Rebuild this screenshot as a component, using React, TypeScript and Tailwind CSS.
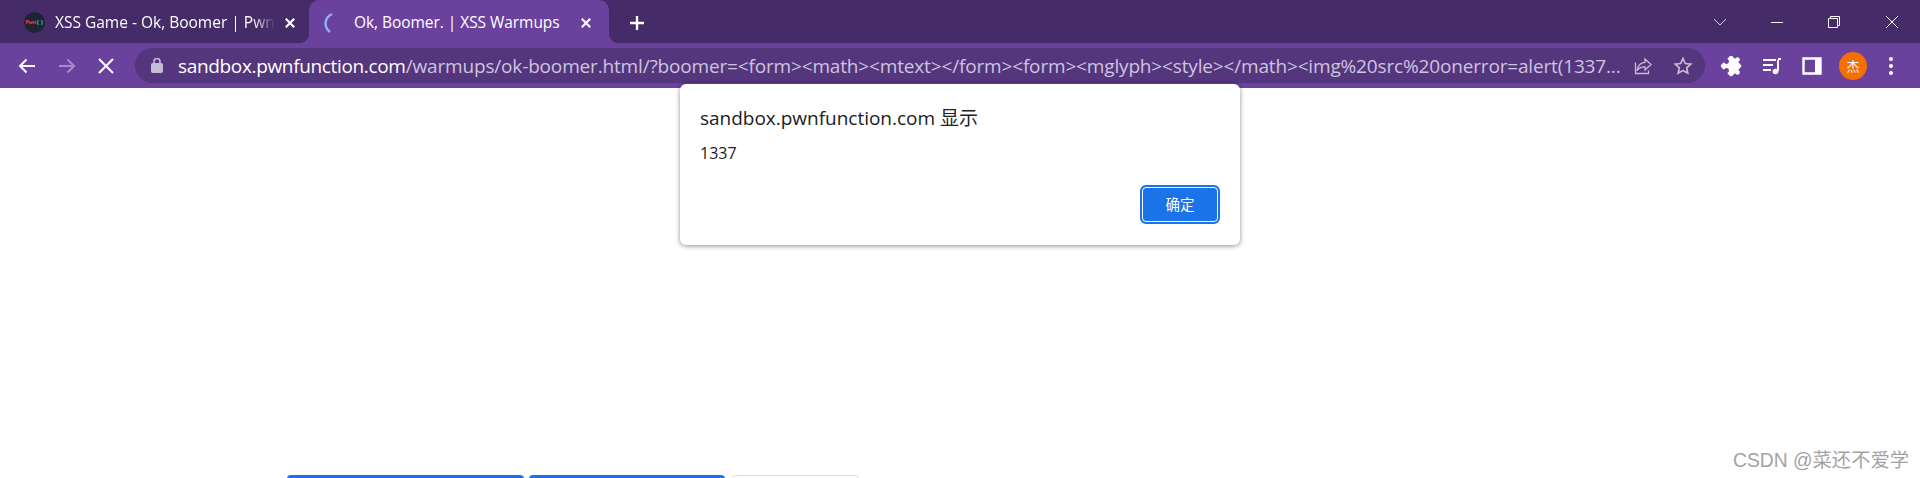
import type { ReactNode } from "react";

const ui = "font-['Open_Sans','Noto_Sans_CJK_SC',sans-serif]";

function Glyph({ size = 20, children, className = "" }: { size?: number; children: ReactNode; className?: string }) {
  return (
    <svg width={size} height={size} viewBox="0 0 20 20" fill="none" stroke="currentColor" className={className}>
      {children}
    </svg>
  );
}

function TabClose() {
  return (
    <Glyph size={14} className="text-white">
      <path d="M4 4l12 12M16 4L4 16" strokeWidth="3" />
    </Glyph>
  );
}

function TabStrip() {
  return (
    <div className="flex h-[43px] bg-[#452c69] text-white">
      <div className="flex w-[309px] items-center pl-[24px] pt-[2px]">
        <div className="flex h-[21px] w-[21px] shrink-0 items-center justify-center rounded-full bg-[#1e2433] font-['Liberation_Mono',monospace] text-[6px] font-bold leading-none">
          <span className="text-[#ef3a62]">Pwn</span>
          <span className="text-[#35c9c0]">()</span>
        </div>
        <div className="ml-[10px] w-[220px] overflow-hidden whitespace-nowrap text-[15.5px] [mask-image:linear-gradient(to_right,black_90%,transparent)]">
          XSS Game - Ok, Boomer | PwnFunction
        </div>
        <div className="ml-[8px]">
          <TabClose />
        </div>
      </div>
      <div className="relative flex h-[43px] w-[300px] items-center rounded-t-[10px] bg-[#6b419e] pl-[12px] pt-[2px]">
        <span className="absolute bottom-0 left-[-10px] h-[10px] w-[10px] bg-[radial-gradient(circle_at_0_0,#452c69_10px,#6b419e_10.5px)]" />
        <span className="absolute bottom-0 right-[-10px] h-[10px] w-[10px] bg-[radial-gradient(circle_at_100%_0,#452c69_10px,#6b419e_10.5px)]" />
        <svg width="16" height="22" viewBox="0 0 16 22" fill="none" className="shrink-0">
          <path d="M11 2C3 6 2.500 15 9 20" stroke="#8ab4f8" strokeWidth="2.400" />
        </svg>
        <div className="ml-[17px] w-[218px] whitespace-nowrap text-[15.5px] tracking-[-0.05px]">Ok, Boomer. | XSS Warmups</div>
        <div className="ml-[7px]">
          <TabClose />
        </div>
      </div>
      <div className="ml-[18px] flex items-center pt-[2px]">
        <Glyph size={20}>
          <path d="M10 3v14M3 10h14" strokeWidth="2.400" />
        </Glyph>
      </div>
      <div className="ml-auto flex items-center text-white">
        <div className="flex w-[57px] justify-center text-[#d9d0e6]">
          <svg width="14" height="8" viewBox="0 0 14 8" fill="none" stroke="currentColor">
            <path d="M1 1l6 6 6-6" />
          </svg>
        </div>
        <div className="flex w-[57px] justify-center">
          <svg width="14" height="14" viewBox="0 0 14 14" fill="none" stroke="currentColor">
            <path d="M1 7.500h12" />
          </svg>
        </div>
        <div className="flex w-[58px] justify-center">
          <svg width="14" height="14" viewBox="0 0 14 14" fill="none" stroke="currentColor">
            <path d="M1.500 3.500h9v9h-9zM3.500 3.500v-2h9v9h-2" />
          </svg>
        </div>
        <div className="flex w-[57px] justify-center">
          <svg width="14" height="14" viewBox="0 0 14 14" fill="none" stroke="currentColor">
            <path d="M1 1l12 12M13 1L1 13" />
          </svg>
        </div>
      </div>
    </div>
  );
}

function Toolbar() {
  return (
    <div className="flex h-[45px] items-start bg-[#6b419e] pt-[5px] text-white">
      <div className="flex h-[35px] w-[135px] shrink-0 items-center">
        <div className="flex w-[47px] justify-center pl-[7px]">
          <Glyph size={20}>
            <path d="M18 10H3M9.500 3.500L3 10l6.500 6.500" strokeWidth="2" />
          </Glyph>
        </div>
        <div className="flex w-[40px] justify-center text-[#a78cc9]">
          <Glyph size={20}>
            <path d="M2 10h15M10.500 3.500L17 10l-6.500 6.500" strokeWidth="2" />
          </Glyph>
        </div>
        <div className="flex w-[38px] justify-center">
          <Glyph size={20}>
            <path d="M3 3l14 14M17 3L3 17" strokeWidth="2" />
          </Glyph>
        </div>
      </div>
      <div className="flex h-[35px] w-[1570px] shrink-0 items-center rounded-full bg-[#54367d]">
        <svg width="12" height="15" viewBox="0 0 12 15" className="ml-[16px] shrink-0 text-[#c7bcd6]" fill="none" stroke="currentColor">
          <rect x="0.500" y="5.500" width="11" height="9" rx="1" fill="currentColor" />
          <path d="M3 6V3.500a3 3 0 0 1 6 0V6" strokeWidth="1.600" />
        </svg>
        <div className="ml-[15px] w-[1449px] whitespace-nowrap pt-[1px] text-[19px] leading-[35px] tracking-[-0.16px] text-[#cfc3e0]">
          <span className="tracking-[-0.34px] text-white">sandbox.pwnfunction.com</span>
          /warmups/ok-boomer.html/?boomer=&lt;form&gt;&lt;math&gt;&lt;mtext&gt;&lt;/form&gt;&lt;form&gt;&lt;mglyph&gt;&lt;style&gt;&lt;/math&gt;&lt;img%20src%20onerror=alert(1337...
        </div>
        <div className="ml-[6px] text-[#c7bcd6]">
          <Glyph size={20}>
            <path d="M12 3l6 5.500-6 5.500v-3.200c-4 0-6.500 1-8 4 .5-4.500 3-8 8-8.500zM2.500 6.500v11h13v-3" strokeWidth="1.300" />
          </Glyph>
        </div>
        <div className="ml-[20px] text-[#c7bcd6]">
          <Glyph size={20}>
            <path d="M10 2.500l2.300 5 5.400.6-4 3.700 1.100 5.400-4.800-2.700-4.800 2.700 1.100-5.400-4-3.700 5.400-.6z" strokeWidth="1.700" />
          </Glyph>
        </div>
      </div>
      <div className="flex h-[35px] flex-1 items-center pl-[17px]">
        <svg width="22" height="22" viewBox="0 0 24 24" fill="white" className="rotate-45">
          <path d="M20.500 11H19V7c0-1.100-.9-2-2-2h-4V3.500C13 2.120 11.880 1 10.500 1S8 2.120 8 3.500V5H4c-1.100 0-1.990.9-1.990 2v3.800H3.500c1.490 0 2.700 1.210 2.700 2.700s-1.210 2.700-2.700 2.700H2V20c0 1.100.9 2 2 2h3.800v-1.500c0-1.490 1.210-2.700 2.700-2.700s2.700 1.210 2.700 2.700V22H17c1.100 0 2-.9 2-2v-4h1.500c1.380 0 2.500-1.120 2.500-2.500S21.880 11 20.500 11z" />
        </svg>
        <svg width="20" height="20" viewBox="0 0 20 20" fill="none" stroke="white" className="ml-[18px]">
          <path d="M1 4h13M1 9h10M1 14h8" strokeWidth="2" />
          <path d="M16 4v11" strokeWidth="2" />
          <path d="M16 3h3" strokeWidth="2" />
          <circle cx="13.500" cy="15.500" r="2.800" fill="white" stroke="none" />
        </svg>
        <svg width="20" height="18" viewBox="0 0 20 18" fill="none" className="ml-[20px]">
          <path d="M1.500 1.500h17v15h-17z" stroke="white" strokeWidth="2.400" />
          <rect x="13" y="1" width="6" height="16" fill="white" />
        </svg>
        <div className="ml-[17px] flex h-[28px] w-[28px] items-center justify-center rounded-full bg-[#f36f00] font-['Noto_Sans_CJK_SC',sans-serif] text-[13px] text-white">
          杰
        </div>
        <div className="ml-[22px] flex flex-col gap-[3px]">
          <span className="h-[4px] w-[4px] rounded-full bg-white" />
          <span className="h-[4px] w-[4px] rounded-full bg-white" />
          <span className="h-[4px] w-[4px] rounded-full bg-white" />
        </div>
      </div>
    </div>
  );
}

function AlertDialog() {
  return (
    <div className="absolute left-[680px] top-[84px] flex h-[161px] w-[560px] flex-col rounded-[6px] bg-white px-[20px] pt-[20px] shadow-[0_1px_5px_rgba(0,0,0,0.45)]">
      <div className="text-[19px] leading-[28px] tracking-[-0.02px] text-[#202124]">sandbox.pwnfunction.com 显示</div>
      <div className="mt-[11px] text-[16px] leading-[20px] text-[#202124]">1337</div>
      <div className="mt-[22px] flex justify-end">
        <button className="flex h-[39px] w-[80px] items-center justify-center rounded-[6px] border-[2px] border-[#1a73e8] bg-[#1a73e8] text-[14.500px] text-white outline outline-1 -outline-offset-[3px] outline-white">
          确定
        </button>
      </div>
    </div>
  );
}

export default function App() {
  return (
    <div className={`relative flex h-screen flex-col overflow-hidden bg-white ${ui}`}>
      <TabStrip />
      <Toolbar />
      <main className="flex flex-1 items-end">
        <div className="mb-[-20px] ml-[287px] flex h-[23px] gap-[5px]">
          <div className="w-[237px] rounded-[4px] bg-[#1a73e8]" />
          <div className="w-[196px] rounded-[4px] bg-[#1a73e8]" />
          <div className="ml-[2px] w-[127px] rounded-[4px] border border-[#dadce0] bg-white" />
        </div>
      </main>
      <AlertDialog />
      <div className="absolute bottom-[5px] right-[11px] font-['Liberation_Sans','Noto_Sans_CJK_SC',sans-serif] text-[19.300px] leading-[24px] text-[#a3a3a3]">
        CSDN @菜还不爱学
      </div>
    </div>
  );
}
